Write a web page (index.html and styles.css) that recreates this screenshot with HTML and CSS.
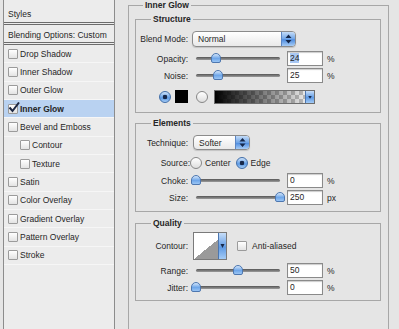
FILE: index.html
```html
<!DOCTYPE html>
<html lang="en">
<head>
    <meta charset="UTF-8">
    <title>Layer Style - Inner Glow</title>
    <link rel="stylesheet" href="styles.css">
</head>
<body>
    <div class="dialog">
        <!-- Left side: list of layer effects -->
        <aside class="styles-panel">
            <div class="panel-head">Styles</div>
            <div class="panel-head blend-head">Blending Options: Custom</div>
            <ul class="effects">
                <li><span class="check"></span>Drop Shadow</li>
                <li><span class="check"></span>Inner Shadow</li>
                <li><span class="check"></span>Outer Glow</li>
                <li class="selected">
                    <span class="check">
                        <svg width="12" height="12" viewBox="0 0 12 12"><path d="M1.5 5.5 L4.5 9 L11 0.5" fill="none" stroke="#1c2744" stroke-width="2"/></svg>
                    </span>Inner Glow
                </li>
                <li><span class="check"></span>Bevel and Emboss</li>
                <li class="sub"><span class="check"></span>Contour</li>
                <li class="sub"><span class="check"></span>Texture</li>
                <li><span class="check"></span>Satin</li>
                <li><span class="check"></span>Color Overlay</li>
                <li><span class="check"></span>Gradient Overlay</li>
                <li><span class="check"></span>Pattern Overlay</li>
                <li><span class="check"></span>Stroke</li>
            </ul>
        </aside>

        <!-- Right side: effect options -->
        <main class="options">
            <section class="group outer">
                <h2 class="legend outer-legend">Inner Glow</h2>

                <section class="group structure">
                    <h3 class="legend">Structure</h3>
                    <div class="row blend-row">
                        <label class="lbl">Blend Mode:</label>
                        <div class="select blend-select">
                            <span>Normal</span>
                            <span class="stepper">
                                <svg width="13" height="14" viewBox="0 0 13 14"><path d="M3.5 6 L6.5 2.5 L9.5 6 Z M3.5 8 L6.5 11.5 L9.5 8 Z" fill="#16284a"/></svg>
                            </span>
                        </div>
                    </div>
                    <div class="row">
                        <label class="lbl">Opacity:</label>
                        <div class="slider"><span class="track"></span><span class="thumb" style="left: 19px;"></span></div>
                        <div class="field"><span class="sel">24</span></div>
                        <span class="unit">%</span>
                    </div>
                    <div class="row">
                        <label class="lbl">Noise:</label>
                        <div class="slider"><span class="track"></span><span class="thumb" style="left: 21px;"></span></div>
                        <div class="field">25</div>
                        <span class="unit">%</span>
                    </div>
                    <div class="row color-row">
                        <span class="radio on"></span>
                        <span class="swatch"></span>
                        <span class="radio off-gap"></span>
                        <div class="gradient">
                            <span class="drop">
                                <svg width="9" height="12" viewBox="0 0 9 12"><path d="M2.5 5 L4.5 8 L6.5 5 Z" fill="#16284a"/></svg>
                            </span>
                        </div>
                    </div>
                </section>

                <section class="group elements">
                    <h3 class="legend">Elements</h3>
                    <div class="row">
                        <label class="lbl">Technique:</label>
                        <div class="select technique-select">
                            <span>Softer</span>
                            <span class="stepper">
                                <svg width="13" height="13" viewBox="0 0 13 13"><path d="M3.5 5.5 L6.5 2 L9.5 5.5 Z M3.5 7.5 L6.5 11 L9.5 7.5 Z" fill="#16284a"/></svg>
                            </span>
                        </div>
                    </div>
                    <div class="row source-row">
                        <label class="lbl">Source:</label>
                        <span class="radio"></span>
                        <span class="opt">Center</span>
                        <span class="radio on edge"></span>
                        <span class="opt">Edge</span>
                    </div>
                    <div class="row choke-row">
                        <label class="lbl">Choke:</label>
                        <div class="slider"><span class="track"></span><span class="thumb" style="left: -1px;"></span></div>
                        <div class="field">0</div>
                        <span class="unit">%</span>
                    </div>
                    <div class="row">
                        <label class="lbl">Size:</label>
                        <div class="slider"><span class="track"></span><span class="thumb" style="left: 83px;"></span></div>
                        <div class="field">250</div>
                        <span class="unit">px</span>
                    </div>
                </section>

                <section class="group quality">
                    <h3 class="legend">Quality</h3>
                    <div class="row contour-row">
                        <label class="lbl">Contour:</label>
                        <div class="contour">
                            <span class="drop">
                                <svg width="7" height="26" viewBox="0 0 7 26"><path d="M1.5 11 L3.5 15 L5.5 11 Z" fill="#16284a"/></svg>
                            </span>
                        </div>
                        <span class="check aa"></span>
                        <span class="opt">Anti-aliased</span>
                    </div>
                    <div class="row range-row">
                        <label class="lbl">Range:</label>
                        <div class="slider"><span class="track"></span><span class="thumb" style="left: 41px;"></span></div>
                        <div class="field">50</div>
                        <span class="unit">%</span>
                    </div>
                    <div class="row">
                        <label class="lbl">Jitter:</label>
                        <div class="slider"><span class="track"></span><span class="thumb" style="left: -1px;"></span></div>
                        <div class="field">0</div>
                        <span class="unit">%</span>
                    </div>
                </section>
            </section>
        </main>
    </div>
</body>
</html>
```

FILE: styles.css
```css
/* Reset styles */
* {
    margin: 0;
    padding: 0;
    box-sizing: border-box;
}

body {
    background-color: #e5e5e5;
    font-family: "Liberation Sans", Arial, sans-serif;
    font-size: 8.5px;
    color: #262626;
    overflow: hidden;
    white-space: nowrap;
}

.dialog {
    display: flex;
    height: 340px;
}

/* Left side effects list */
.styles-panel {
    margin-left: 3px;
    width: 112px;
    flex: none;
    background-color: #ececec;
    border-left: 1px solid #8c8c8c;
    border-right: 1px solid #8c8c8c;
}

.panel-head {
    height: 25px;
    padding: 8px 0 0 4px;
    line-height: 12px;
    border-bottom: 3px double #6c6c6c;
}

.blend-head {
    height: 20px;
    padding-top: 4px;
}

.effects {
    list-style: none;
}

.effects li {
    height: 18.33px;
    display: flex;
    align-items: center;
    padding-left: 4px;
    border-bottom: 1px solid #f6f6f6;
}

.effects li.sub {
    padding-left: 16px;
}

.effects li.selected {
    background-color: #b9d2f1;
    font-weight: bold;
}

.check {
    width: 10px;
    height: 10px;
    flex: none;
    margin-right: 2px;
    border: 1px solid #9b9b9b;
    border-radius: 1px;
    background: linear-gradient(#ffffff, #e3e3e3);
    position: relative;
}

.check svg {
    position: absolute;
    left: -1px;
    top: -3px;
}

/* Right side options */
.options {
    flex: 1;
    padding: 5px 10px 0 13px;
}

.group {
    position: relative;
    border: 1px solid #a7a7a7;
    display: flex;
    flex-direction: column;
    gap: 2px;
}

.outer {
    height: 400px;
    padding: 13px 7px 0 6px;
    gap: 0;
}

.legend {
    position: absolute;
    top: -7px;
    left: 15px;
    padding: 0 2px;
    font-size: 8.5px;
    line-height: 12px;
    font-weight: bold;
    background-color: #e5e5e5;
}

.outer-legend {
    left: 14px;
}

.structure {
    padding: 11px 0 8px;
}

.elements {
    margin-top: 10px;
    padding: 11px 0 6px;
}

.quality {
    margin-top: 11px;
    padding: 8px 0 5px;
}

.row {
    display: flex;
    align-items: center;
    height: 15px;
}

.lbl {
    width: 54px;
    flex: none;
    text-align: right;
    padding-right: 2px;
}

.blend-row {
    height: 16px;
    margin-bottom: 2px;
}

.color-row {
    margin-top: 4px;
    padding-left: 23px;
}

.source-row {
    height: 13px;
    margin-top: 4px;
}

.choke-row {
    margin-top: 2px;
}

.contour-row {
    height: 28px;
}

.range-row {
    margin-top: 1px;
}

/* Popup menus */
.select {
    display: flex;
    align-items: center;
    height: 100%;
    padding-left: 5px;
    border: 1px solid #8b8b8b;
    border-radius: 4px;
    background: linear-gradient(#ffffff, #e9e9e9);
    box-shadow: 0 1px 1px rgba(0, 0, 0, 0.15);
    overflow: hidden;
}

.blend-select {
    width: 104px;
    margin-left: 2px;
}

.technique-select {
    width: 57px;
    margin-left: 3px;
}

.stepper {
    margin-left: auto;
    width: 14px;
    height: 100%;
    display: flex;
    align-items: center;
    justify-content: center;
    border-left: 1px solid #5b86c4;
    background: linear-gradient(#c4dcf8, #6fa4e6 50%, #4f8de0 55%, #a8cdf6);
}

/* Sliders and number fields */
.slider {
    position: relative;
    width: 92px;
    height: 15px;
    margin-left: 2px;
    flex: none;
}

.track {
    display: block;
    height: 3px;
    margin: 6px 4px 0;
    border-radius: 2px;
    background: linear-gradient(#555555, #9c9c9c);
}

.thumb {
    position: absolute;
    top: 2px;
    width: 10px;
    height: 10px;
    border: 1px solid #4d77b0;
    border-radius: 5px 5px 2px 2px;
    background: linear-gradient(#d3e6fb, #6ea6e9 55%, #9ac5f4);
}

.field {
    width: 36px;
    height: 15px;
    margin-left: 3px;
    padding-left: 2px;
    line-height: 13px;
    border: 1px solid #8a8a8a;
    background-color: #ffffff;
    box-shadow: inset 0 1px 1px rgba(0, 0, 0, 0.2);
}

.sel {
    background-color: #a9c8f3;
}

.unit {
    margin-left: 4px;
}

/* Radios, colour and gradient */
.radio {
    width: 12px;
    height: 12px;
    flex: none;
    border-radius: 50%;
    border: 1px solid #878787;
    background: linear-gradient(#ffffff, #dedede);
}

.radio.on {
    border-color: #416ea9;
    background: radial-gradient(circle, #17284a 0 2px, transparent 2.6px), linear-gradient(#d0e4fa, #5d9be6 60%, #a7cdf6);
}

.off-gap {
    margin-left: 8px;
}

.swatch {
    width: 13px;
    height: 13px;
    margin-left: 4px;
    background-color: #000000;
}

.gradient {
    display: flex;
    justify-content: flex-end;
    width: 101px;
    height: 14px;
    margin-left: 6px;
    border: 1px solid #6d6d6d;
    background:
        linear-gradient(to right, #000000, rgba(0, 0, 0, 0)),
        repeating-conic-gradient(#c9c9c9 0 25%, #ffffff 0 50%) 0 0 / 8px 8px;
}

.drop {
    width: 9px;
    height: 100%;
    display: flex;
    align-items: center;
    justify-content: center;
    border-left: 1px solid #4b76b0;
    background: linear-gradient(#c7def9, #5f9ae4 55%, #a4cbf5);
}

.opt {
    margin-left: 3px;
}

.source-row .lbl {
    padding-right: 0;
}

.edge {
    margin-left: 5px;
}

/* Contour thumbnail */
.contour {
    display: flex;
    justify-content: flex-end;
    width: 34px;
    height: 28px;
    margin-left: 3px;
    border: 1px solid #7a7a7a;
    background: linear-gradient(to bottom right, #ffffff 50%, #9a9a9a 50%);
}

.contour .drop {
    width: 8px;
}

.check.aa {
    margin-left: 10px;
    margin-right: 2px;
}
```
